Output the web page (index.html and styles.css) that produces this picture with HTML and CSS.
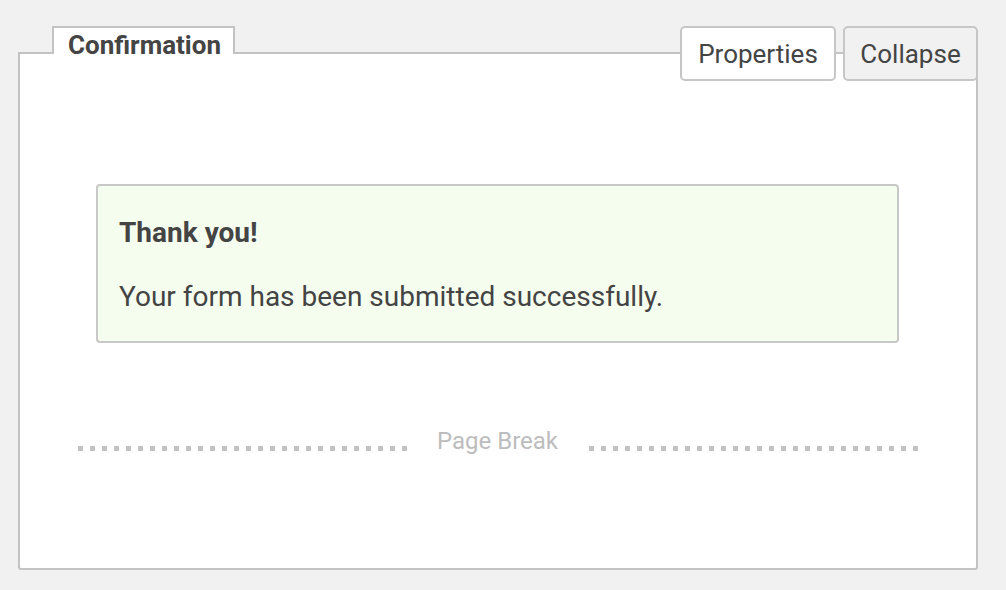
FILE: index.html
```html
<!DOCTYPE html>
<html lang="en">
<head>
<meta charset="utf-8">
<title>Confirmation</title>
<link rel="stylesheet" href="styles.css">
</head>
<body>
  <section class="panel">
    <div class="tab">Confirmation</div>
    <div class="actions">
      <button class="btn btn-light" type="button">Properties</button>
      <button class="btn btn-grey" type="button">Collapse</button>
    </div>
    <div class="message">
      <p class="message-title">Thank you!</p>
      <p class="message-text">Your form has been submitted successfully.</p>
    </div>
    <div class="page-break">
      <span class="dots"></span>
      <span class="pb-label">Page Break</span>
      <span class="dots dots-right"></span>
    </div>
  </section>
</body>
</html>
```

FILE: styles.css
```css
* { box-sizing: border-box; }

html, body {
  margin: 0;
  background: #f1f1f1;
}

body {
  padding: 52px 0 0 18px;
  font-family: Roboto, "Liberation Sans", sans-serif;
  color: #444;
}

.panel {
  position: relative;
  width: 960px;
  height: 518px;
  background: #fff;
  border: 2px solid #c3c3c3;
  border-radius: 0 0 3px 3px;
  padding: 130px 77px 0 76px;
}

.tab {
  position: absolute;
  top: -28px;
  left: 32px;
  width: 183px;
  height: 28px;
  padding: 4px 0 0 14px;
  background: #fff;
  border: 2px solid #c3c3c3;
  border-bottom: 0;
  font-size: 26px;
  font-weight: 700;
  line-height: 26px;
  white-space: nowrap;
}

.actions {
  position: absolute;
  top: -28px;
  right: -2px;
  display: flex;
  gap: 7px;
}

.btn {
  height: 55px;
  padding: 0 16px;
  border: 2px solid #c6c6c6;
  border-radius: 5px;
  font-family: Roboto, "Liberation Sans", sans-serif;
  font-size: 26px;
  color: #444;
  display: flex;
  align-items: center;
  justify-content: center;
}

.btn-light { background: #fff; width: 156px; }
.btn-grey { background: #f1f1f1; width: 135px; }

.message {
  background: #f5fdee;
  border: 2px solid #c8c8c8;
  border-radius: 4px;
  padding: 31px 22px 28px 21px;
}

.message p {
  margin: 0;
  font-size: 28px;
  line-height: 32px;
}

.message-title { font-weight: 700; }

.message-text { margin-top: 32px !important; }

.page-break {
  display: flex;
  align-items: flex-start;
  margin: 84px -19px 0 -18px;
}

.dots {
  flex: 1;
  height: 5px;
  margin-top: 19px;
  background: repeating-linear-gradient(to right, #c2c2c2 0 5px, transparent 5px 12px);
}

.dots-right {
  background: repeating-linear-gradient(to left, #c2c2c2 0 5px, transparent 5px 12px);
}

.pb-label {
  margin: 0 27px 0 26px;
  font-size: 24px;
  line-height: 28px;
  color: #bdbdbd;
  white-space: nowrap;
}
```
